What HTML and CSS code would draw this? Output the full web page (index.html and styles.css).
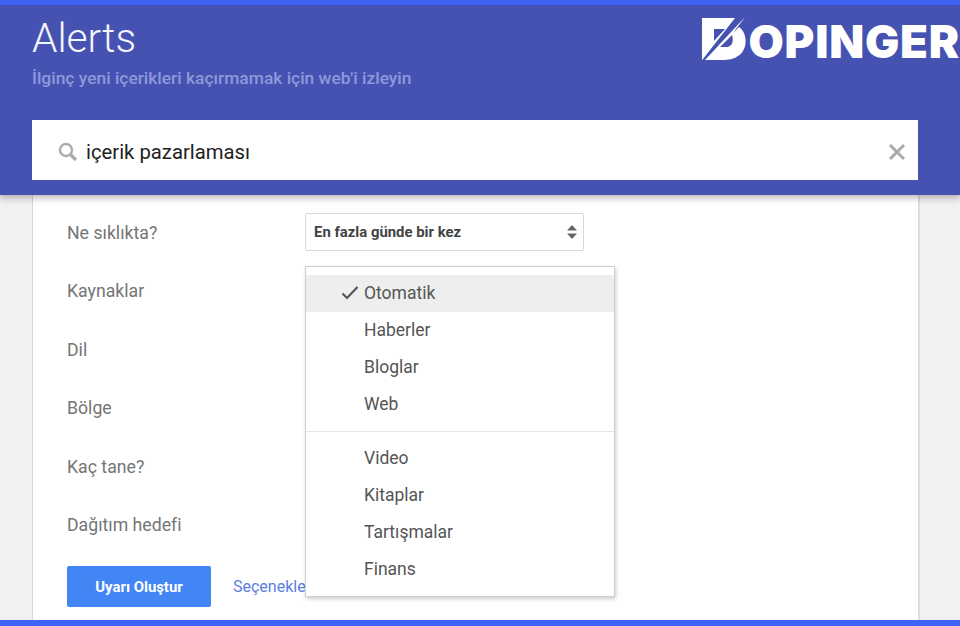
FILE: index.html
```html
<!DOCTYPE html>
<html lang="tr">
<head>
    <meta charset="UTF-8">
    <title>Alerts</title>
    <link rel="stylesheet" href="styles.css">
</head>
<body>

    <!-- mavi baslik -->
    <header class="header">
        <div class="header-top">
            <div class="titles">
                <h1 class="title">Alerts</h1>
                <p class="subtitle">İlginç yeni içerikleri kaçırmamak için web'i izleyin</p>
            </div>
            <div class="logo">
                <svg class="logo-mark" width="45" height="46" viewBox="0 0 45 46">
                    <path fill="#fff" fill-rule="evenodd" d="M0 2H33L1 43L0 44Z M12 13V25L23 13Z"/>
                    <path fill="#fff" fill-rule="evenodd" d="M43 1L3 44H20C27 44 32 43 36 40C46 34 46 17 37 11L31 17Z M18 31L30 19C32 25 30 31 24 31Z"/>
                </svg>
                <span class="logo-text">OPINGER</span>
            </div>
        </div>
        <div class="search">
            <svg class="search-icon" width="20" height="20" viewBox="0 0 20 20">
                <circle cx="8" cy="8" r="6" fill="none" stroke="#aaa" stroke-width="2.400"/>
                <path d="M12.500 12.500L18 18" stroke="#aaa" stroke-width="3.200"/>
            </svg>
            <span class="search-text">içerik pazarlaması</span>
            <svg class="search-clear" width="18" height="18" viewBox="0 0 18 18">
                <path d="M2 2L16 16M16 2L2 16" stroke="#aaa" stroke-width="3"/>
            </svg>
        </div>
    </header>

    <!-- form alani -->
    <main class="main">
        <section class="card">
            <div class="row">
                <span class="row-label">Ne sıklıkta?</span>
                <div class="select">
                    <span>En fazla günde bir kez</span>
                    <svg width="10" height="16" viewBox="0 0 10 16">
                        <path d="M5 1L10 6.500H0Z M5 15L0 9.500H10Z" fill="#666"/>
                    </svg>
                </div>
            </div>
            <div class="row"><span class="row-label">Kaynaklar</span></div>
            <div class="row"><span class="row-label">Dil</span></div>
            <div class="row"><span class="row-label">Bölge</span></div>
            <div class="row"><span class="row-label">Kaç tane?</span></div>
            <div class="row"><span class="row-label">Dağıtım hedefi</span></div>
            <div class="actions">
                <button class="create-button">Uyarı Oluştur</button>
                <a class="options-link">Seçenekleri gizle</a>
            </div>

            <!-- acilir menu -->
            <ul class="menu">
                <li class="menu-item selected">
                    <svg class="check" width="18" height="14" viewBox="0 0 18 14">
                        <path d="M1.500 7.500L6 12L16.500 1" fill="none" stroke="#555" stroke-width="2.200"/>
                    </svg>
                    Otomatik
                </li>
                <li class="menu-item">Haberler</li>
                <li class="menu-item">Bloglar</li>
                <li class="menu-item">Web</li>
                <li class="menu-divider"></li>
                <li class="menu-item">Video</li>
                <li class="menu-item">Kitaplar</li>
                <li class="menu-item">Tartışmalar</li>
                <li class="menu-item">Finans</li>
            </ul>
        </section>
    </main>

    <div class="bottom-bar"></div>

</body>
</html>
```

FILE: styles.css
```css
/* sayfa */
body {
    margin: 0;
    height: 626px;
    overflow: hidden;
    display: flex;
    flex-direction: column;
    font-family: Roboto, "Liberation Sans", sans-serif;
    background-color: #f1f1f1;
}

/* baslik */
.header {
    position: relative;
    z-index: 2;
    height: 190px;
    flex: none;
    border-top: 5px solid #3f62f5;
    background-color: #4652b2;
    box-shadow: 0 3px 7px rgba(0, 0, 0, 0.28);
    padding: 0 42px 0 32px;
    display: flex;
    flex-direction: column;
}

.header-top {
    height: 115px;
    display: flex;
    justify-content: space-between;
}

.title {
    margin: 9px 0 0;
    font-size: 40.700px;
    font-weight: 300;
    line-height: 48px;
    color: #f4f5fb;
}

.subtitle {
    margin: 5px 0 0;
    font-size: 17.400px;
    font-weight: 500;
    line-height: 22px;
    color: #8e99da;
}

.logo {
    display: flex;
    align-items: flex-start;
    margin: 9px -42px 0 0;
}

.logo-mark {
    margin: 2px 1px 0 0;
}

.logo-text {
    font-family: Inter, "Open Sans", sans-serif;
    font-size: 45.500px;
    font-weight: 900;
    line-height: 46px;
    letter-spacing: 0.800px;
    color: #fff;
    margin-top: 5px;
}

/* arama kutusu */
.search {
    height: 60px;
    box-sizing: border-box;
    padding: 3px 12px 0 26px;
    background-color: #fff;
    display: flex;
    align-items: center;
}

.search-icon {
    flex: none;
    margin-right: 8px;
}

.search-text {
    font-size: 20.300px;
    color: #222;
    flex: 1;
}

.search-clear {
    flex: none;
}

/* form */
.main {
    flex: 1;
    min-height: 0;
    padding: 0 40px 0 32px;
}

.card {
    position: relative;
    height: 100%;
    box-sizing: border-box;
    background-color: #fff;
    border-left: 1px solid #d8d8d8;
    border-right: 2px solid #dddddd;
    padding: 8px 34px 0;
}

.row {
    height: 58.500px;
    display: flex;
    align-items: center;
}

.row-label {
    width: 238px;
    font-size: 17.700px;
    color: #757575;
    padding-top: 1px;
}

.select {
    width: 279px;
    height: 38px;
    box-sizing: border-box;
    border: 1px solid #d9d9d9;
    border-radius: 2px;
    padding: 0 6px 0 8px;
    display: flex;
    align-items: center;
    justify-content: space-between;
    font-size: 14.900px;
    font-weight: 700;
    color: #444;
}

.actions {
    margin-top: 12px;
    display: flex;
    align-items: center;
    gap: 22px;
}

.create-button {
    width: 144px;
    height: 41px;
    border: none;
    border-radius: 2px;
    background-color: #4285f4;
    color: #fff;
    font-family: inherit;
    font-size: 14.900px;
    font-weight: 700;
}

.options-link {
    font-size: 16px;
    color: #5c7ee0;
    white-space: nowrap;
}

/* menu */
.menu {
    position: absolute;
    left: 272px;
    top: 71px;
    width: 310px;
    box-sizing: border-box;
    margin: 0;
    padding: 8px 0;
    list-style: none;
    background-color: #fff;
    border: 1px solid #cfcfcf;
    box-shadow: 1px 2px 4px rgba(0, 0, 0, 0.2);
}

.menu-item {
    position: relative;
    height: 37px;
    line-height: 37.500px;
    padding-left: 58px;
    font-size: 17.500px;
    color: #555;
}

.menu-item.selected {
    background-color: #eeeeee;
}

.check {
    position: absolute;
    left: 35px;
    top: 11px;
}

.menu-divider {
    height: 1px;
    margin: 8px 0;
    background-color: #e6e6e6;
}

.bottom-bar {
    height: 6px;
    flex: none;
    background-color: #3f62f5;
}
```
